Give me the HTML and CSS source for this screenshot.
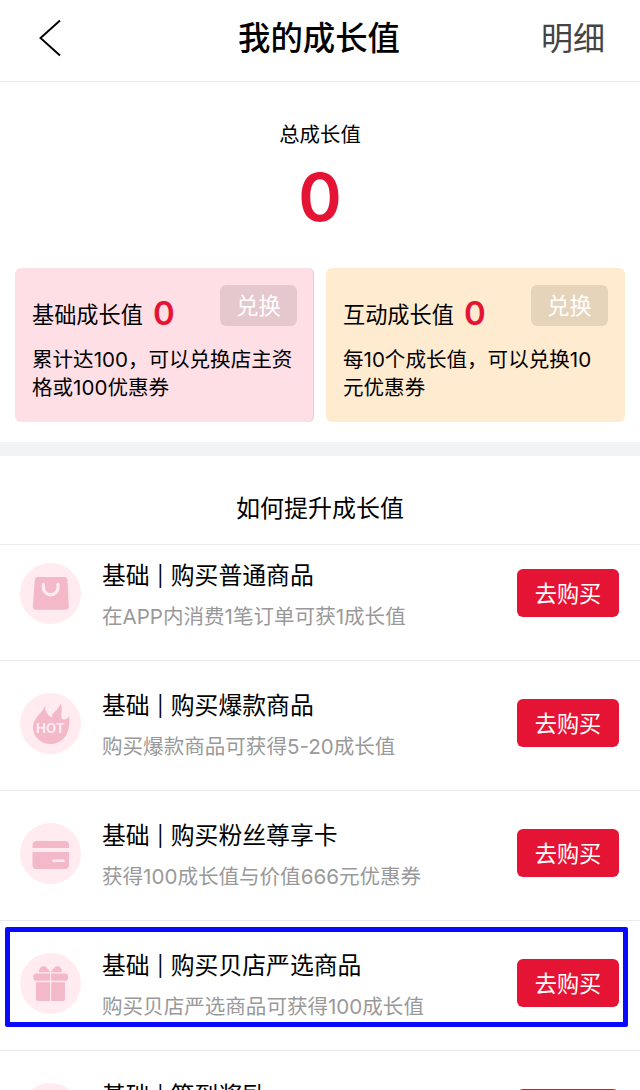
FILE: index.html
```html
<!DOCTYPE html>
<html lang="zh-CN">
<head>
<meta charset="utf-8">
<title>我的成长值</title>
<link rel="stylesheet" href="styles.css">
</head>
<body>
<main class="page">
  <header class="navbar">
    <svg class="back" width="24" height="40" viewBox="0 0 24 40"><path d="M22 2.500 L2.500 20 L22 37.500" fill="none" stroke="#000" stroke-width="1.900"/></svg>
    <h1 class="navbar-title">我的成长值</h1>
    <a class="navbar-link">明细</a>
  </header>

  <section class="total">
    <div class="total-label">总成长值</div>
    <div class="total-value">0</div>
  </section>

  <section class="cards">
    <article class="card card-pink">
      <div class="card-head">
        <span class="card-label">基础成长值</span>
        <span class="card-value">0</span>
        <button class="exchange">兑换</button>
      </div>
      <p class="card-desc">累计达100，可以兑换店主资<br>格或100优惠券</p>
    </article>
    <article class="card card-cream">
      <div class="card-head">
        <span class="card-label">互动成长值</span>
        <span class="card-value">0</span>
        <button class="exchange">兑换</button>
      </div>
      <p class="card-desc">每10个成长值，可以兑换10<br>元优惠券</p>
    </article>
  </section>

  <div class="divider"></div>
  <h2 class="section-title">如何提升成长值</h2>

  <ul class="tasks">
    <li class="task task-first">
      <svg class="icon" viewBox="0 0 61 61"><circle class="disc" cx="30.500" cy="30.500" r="30.500"/><path class="shape" d="M18 14H44.500Q47.300 14 47.500 17L48.800 43Q48.800 46.800 45.500 46.800H16Q12.800 46.800 12.800 43L14.800 17Q15 14 18 14Z"/><path class="line" stroke-width="3.400" d="M23.400 21.500V24.500A7.300 7.300 0 0 0 38 24.500V21.500"/></svg>
      <div class="info"><h3 class="task-title">基础<span class="bar">|</span>购买普通商品</h3><p class="task-desc">在APP内消费1笔订单可获1成长值</p></div>
      <button class="buy">去购买</button>
    </li>
    <li class="task">
      <svg class="icon" viewBox="0 0 61 61"><circle class="disc" cx="30.500" cy="30.500" r="30.500"/><path class="shape" d="M25.500 12C24.600 16.500 26.500 21.500 31.500 24.500C32.200 19.500 38.500 17 40.500 10.500C43.200 14.500 40.500 21.500 41.500 25.500C44 28 47.500 26 49.200 23C49.800 32 48.500 40.500 44 45.300C36.500 53 24.500 53 17.500 45.500C12.500 40 11.800 33.500 14.500 28C17 22.500 23 18.500 25.500 12Z"/><text class="hot" x="16.100" y="40.200" textLength="28.500" lengthAdjust="spacingAndGlyphs">HOT</text></svg>
      <div class="info"><h3 class="task-title">基础<span class="bar">|</span>购买爆款商品</h3><p class="task-desc">购买爆款商品可获得5-20成长值</p></div>
      <button class="buy">去购买</button>
    </li>
    <li class="task">
      <svg class="icon" viewBox="0 0 61 61"><circle class="disc" cx="30.500" cy="30.500" r="30.500"/><path class="shape" d="M12.500 25V22Q12.500 18 16.500 18H45Q49 18 49 22V25ZM12.500 29H49V42Q49 46 45 46H16.500Q12.500 46 12.500 42Z"/><path class="line" stroke-width="2.600" d="M33.500 37.700H43.500"/></svg>
      <div class="info"><h3 class="task-title">基础<span class="bar">|</span>购买粉丝尊享卡</h3><p class="task-desc">获得100成长值与价值666元优惠券</p></div>
      <button class="buy">去购买</button>
    </li>
    <li class="task highlighted">
      <svg class="icon" viewBox="0 0 61 61"><circle class="disc" cx="30.500" cy="30.500" r="30.500"/><path class="shape" d="M19 19.300C19 13 24.500 11.800 27 15L30.500 19.300L34 15C36.500 11.800 42 13 42 19.300ZM16 20.500H30V27.800H16Q13.500 27.800 13.500 25.300V23Q13.500 20.500 16 20.500ZM31.200 20.500H45.500Q48 20.500 48 23V25.300Q48 27.800 45.500 27.800H31.200ZM16 29.200H30V48H18Q16 48 16 46ZM31.200 29.200H45V46Q45 48 43 48H31.200Z"/></svg>
      <div class="info"><h3 class="task-title">基础<span class="bar">|</span>购买贝店严选商品</h3><p class="task-desc">购买贝店严选商品可获得100成长值</p></div>
      <button class="buy">去购买</button>
    </li>
    <li class="task">
      <svg class="icon" viewBox="0 0 61 61"><circle class="disc" cx="30.500" cy="30.500" r="30.500"/></svg>
      <div class="info"><h3 class="task-title">基础<span class="bar">|</span>签到奖励</h3></div>
      <button class="buy"></button>
    </li>
  </ul>
</main>
</body>
</html>
```
FILE: styles.css
```css
*, ::after { box-sizing: border-box; margin: 0; padding: 0; }
body { background: #fff; overflow: hidden; }
.page {
  width: 640px; height: 1090px; overflow: hidden;
  background: #fff; color: #000;
  font-family: Inter, "Noto Sans CJK SC", sans-serif;
  white-space: nowrap;
}
button { border: 0; font-family: inherit; color: #fff; }

.navbar {
  height: 82px; padding: 0 35px 4px 38px;
  display: grid; grid-template-columns: 100px 1fr 105px; align-items: center;
  border-bottom: 1px solid #ebebeb;
}
.back { margin-top: -2px; }
.navbar-title { font-size: 32.400px; font-weight: 500; text-align: center; line-height: 48px; }
.navbar-link { font-size: 32px; font-weight: 400; line-height: 48px; text-align: right; color: #444; }

.total { height: 186px; padding-top: 38px; text-align: center; }
.total-label { font-size: 20.400px; line-height: 30px; }
.total-value { font-size: 66px; line-height: 84px; margin-top: 5px; font-weight: 600; color: #e61434; }

.cards { height: 174px; padding: 0 15px; display: grid; grid-template-columns: 299px 299px; column-gap: 12px; }
.card { height: 154px; padding: 17px 17px 0; border-radius: 6px; }
.card-pink { background: #ffdfe6; box-shadow: inset -1px 0 #e7cbd2; }
.card-cream { background: #ffebd0; }
.card-head { display: flex; height: 61px; }
.card-label { font-size: 22.200px; line-height: 32px; margin-top: 14px; }
.card-value { font-size: 33px; line-height: 40px; margin: 8px 0 0 10px; font-weight: 600; color: #e61434; }
.exchange { width: 77px; height: 41px; margin-left: auto; border-radius: 6px; font-size: 22.200px; font-weight: 400; line-height: 41px; background: rgba(0, 0, 0, .1); }
.card-desc { font-size: 20.550px; line-height: 28px; }

.divider { height: 14px; background: #f2f3f5; }
.section-title { height: 89px; padding-top: 9px; line-height: 88px; font-size: 24px; font-weight: 400; text-align: center; border-bottom: 1px solid #ebebeb; }

.tasks { list-style: none; }
.task { position: relative; height: 130px; padding: 32px 21px 0 20px; display: flex; border-bottom: 1px solid #ebebeb; }
.task-first { height: 116px; padding-top: 18px; }
.icon { width: 61px; height: 61px; flex: none; }
.disc { fill: #ffebf0; }
.shape { fill: #f3b9c8; }
.line { fill: none; stroke: #ffebf0; stroke-linecap: round; }
.hot { font: 700 13px Inter, sans-serif; fill: #ffebf0; }
.info { margin-left: 21px; margin-top: -5px; }
.task-title { height: 36px; font-size: 23.850px; line-height: 36px; font-weight: 400; }
.bar { display: inline-block; width: 21px; text-align: center; font-size: 20px; line-height: 20px; vertical-align: 1px; }
.task-desc { font-size: 20.550px; line-height: 30px; margin-top: 8px; color: #999; }
.buy { width: 102px; height: 48px; margin: 6px 0 0 auto; padding-bottom: 3px; border-radius: 6px; background: #e61434; font-size: 22.200px; }
.highlighted::after { content: ""; position: absolute; left: 5px; top: 6px; width: 623px; height: 100px; border: 5px solid #0a0aff; border-radius: 2px; }
```
